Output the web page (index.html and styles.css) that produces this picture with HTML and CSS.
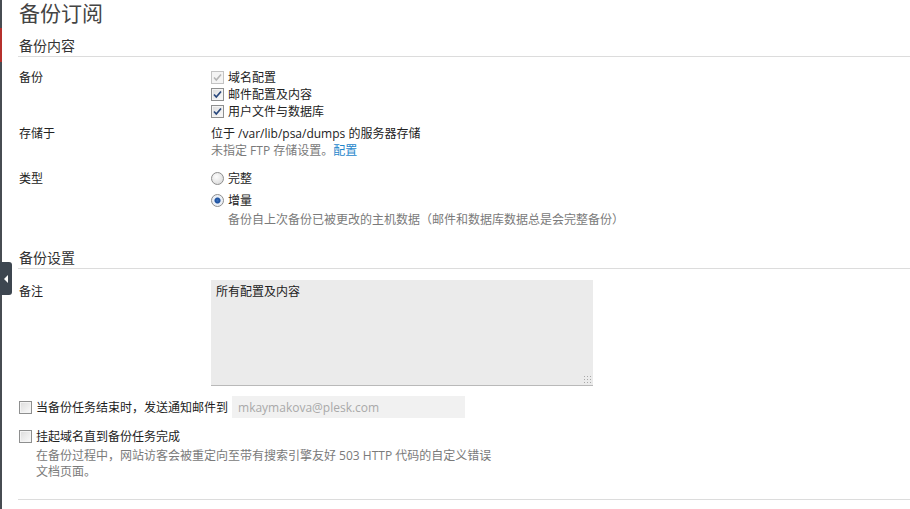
FILE: index.html
```html
<!DOCTYPE html>
<html lang="zh-CN">
<head>
<meta charset="utf-8">
<title>备份订阅</title>
<link rel="stylesheet" href="styles.css">
</head>
<body>
<div class="app">
  <div class="edge">
    <span class="edge-accent"></span>
    <span class="edge-tab"><svg width="5" height="8" viewBox="0 0 5 8"><path d="M4 0 L0 4 L4 8 Z" fill="#fff"/></svg></span>
  </div>
  <main class="page">
    <h1 class="title">备份订阅</h1>

    <h2 class="section-title">备份内容</h2>

    <div class="row row-first">
      <div class="label">备份</div>
      <div class="field">
        <div class="check-line"><span class="cb cb-disabled"><svg viewBox="0 0 11 11"><path d="M2 5.5 L4.3 8 L9 2.5" fill="none" stroke="#b5b5b5" stroke-width="1.6"/></svg></span><span>域名配置</span></div>
        <div class="check-line"><span class="cb"><svg viewBox="0 0 11 11"><path d="M2 5.5 L4.3 8 L9 2.5" fill="none" stroke="#29487d" stroke-width="1.7"/></svg></span><span>邮件配置及内容</span></div>
        <div class="check-line"><span class="cb"><svg viewBox="0 0 11 11"><path d="M2 5.5 L4.3 8 L9 2.5" fill="none" stroke="#29487d" stroke-width="1.7"/></svg></span><span>用户文件与数据库</span></div>
      </div>
    </div>

    <div class="row row-store">
      <div class="label">存储于</div>
      <div class="field">
        <div class="line">位于 /var/lib/psa/dumps 的服务器存储</div>
        <div class="line muted">未指定 FTP 存储设置。<a class="link" href="#">配置</a></div>
      </div>
    </div>

    <div class="row row-type">
      <div class="label">类型</div>
      <div class="field">
        <div class="radio-line"><span class="radio"></span><span>完整</span></div>
        <div class="radio-line radio-second"><span class="radio radio-on"></span><span>增量</span></div>
        <div class="line muted hint">备份自上次备份已被更改的主机数据（邮件和数据库数据总是会完整备份）</div>
      </div>
    </div>

    <h2 class="section-title section-second">备份设置</h2>

    <div class="row row-note">
      <div class="label label-note">备注</div>
      <div class="field">
        <div class="note-wrap">
          <textarea class="note">所有配置及内容</textarea>
          <span class="grip"></span>
        </div>
      </div>
    </div>

    <div class="opt opt-notify">
      <span class="cb cb-empty"></span>
      <span class="opt-text">当备份任务结束时，发送通知邮件到</span>
      <input class="email" type="text" value="mkaymakova@plesk.com">
    </div>

    <div class="opt opt-suspend">
      <span class="cb cb-empty"></span>
      <span class="opt-text">挂起域名直到备份任务完成</span>
    </div>
    <div class="opt-desc">在备份过程中，网站访客会被重定向至带有搜索引擎友好 503 HTTP 代码的自定义错误文档页面。</div>

    <div class="bottom-rule"></div>
  </main>
</div>
</body>
</html>
```

FILE: styles.css
```css
html, body {
  margin: 0;
  padding: 0;
  background: #fff;
}

body {
  font-family: "Open Sans", "Noto Sans CJK SC", sans-serif;
  font-size: 12px;
  color: #222;
  width: 910px;
  height: 509px;
  overflow: hidden;
}

.app {
  display: flex;
  min-height: 509px;
}

.edge {
  width: 2px;
  background: #474c52;
  position: relative;
  flex: none;
}

.edge-accent {
  position: absolute;
  left: 0;
  top: 28px;
  width: 2px;
  height: 34px;
  background: #b5302c;
}

.edge-tab {
  position: absolute;
  left: 0;
  top: 262px;
  width: 12px;
  height: 33px;
  background: #3d4650;
  border-radius: 0 3px 3px 0;
  display: flex;
  align-items: center;
  justify-content: center;
}

.page {
  flex: 1;
  padding-left: 16px;
}

.title {
  margin: 0;
  font-size: 21px;
  font-weight: normal;
  line-height: 26px;
  color: #444;
  padding-left: 1px;
}

.section-title {
  margin: 10px 0 0;
  font-size: 14px;
  font-weight: normal;
  line-height: 20px;
  color: #333;
  padding-left: 1px;
  border-bottom: 1px solid #dcdcdc;
}

.section-second {
  margin-top: 20px;
}

.row {
  display: flex;
  line-height: 17px;
}

.row-first { margin-top: 12px; }
.row-store { margin-top: 5px; }
.row-type { margin-top: 11px; }
.row-note { margin-top: 11px; }

.label {
  width: 192px;
  flex: none;
  padding-left: 1px;
  color: #222;
}

.label-note {
  padding-top: 3px;
}

.field {
  display: flex;
  flex-direction: column;
}

.check-line,
.radio-line {
  display: flex;
  align-items: center;
  gap: 4px;
  height: 17px;
}

.radio-second {
  margin-top: 5px;
}

.hint {
  margin-top: 2px;
  padding-left: 17px;
}

.muted {
  color: #7a7a7a;
}

.link {
  color: #1f87cc;
  text-decoration: none;
}

.cb {
  width: 11px;
  height: 11px;
  border: 1px solid #8e8f8f;
  background: linear-gradient(135deg, #dcdcdc, #fbfbfb);
  display: inline-flex;
  align-items: center;
  justify-content: center;
  flex: none;
  box-shadow: inset 0 0 0 1px #f4f4f4;
}

.cb svg {
  width: 11px;
  height: 11px;
}

.cb-disabled {
  border-color: #c3c3c3;
  background: #f4f4f4;
}

.radio {
  width: 11px;
  height: 11px;
  border: 1px solid #8d8d8d;
  border-radius: 50%;
  background: radial-gradient(circle at 40% 35%, #fdfdfd, #d4d4d4);
  flex: none;
  position: relative;
}

.radio-on {
  background: radial-gradient(circle, #3a72c0 0, #1c4f9c 2.5px, #e8eef7 3.5px, #f5f5f5 100%);
}

.note-wrap {
  position: relative;
  width: 382px;
  height: 106px;
}

.note {
  width: 382px;
  height: 106px;
  box-sizing: border-box;
  margin: 0;
  padding: 3px 5px;
  border: none;
  border-bottom: 1px solid #b9b9b9;
  background: #ebebeb;
  font-family: "Open Sans", "Noto Sans CJK SC", sans-serif;
  font-size: 12px;
  line-height: 17px;
  color: #222;
  resize: none;
  outline: none;
  display: block;
}

.grip {
  position: absolute;
  right: 2px;
  bottom: 3px;
  width: 8px;
  height: 8px;
  background-image: radial-gradient(circle, #a8a8a8 0.7px, transparent 0.9px);
  background-size: 3px 3px;
}

.opt {
  display: flex;
  align-items: center;
  padding-left: 1px;
}

.opt .cb {
  margin-right: 4px;
}

.opt-notify {
  margin-top: 10px;
  height: 22px;
}

.opt-suspend {
  margin-top: 10px;
  height: 17px;
}

.opt-text {
  line-height: 17px;
  color: #222;
}

.email {
  margin-left: 4px;
  width: 233px;
  height: 22px;
  box-sizing: border-box;
  border: none;
  background: #f1f1f1;
  padding: 0 6px;
  font-family: "Open Sans", "Noto Sans CJK SC", sans-serif;
  font-size: 12px;
  color: #a9a9a9;
  outline: none;
}

.opt-desc {
  margin-top: 3px;
  padding-left: 18px;
  width: 460px;
  line-height: 16px;
  color: #7a7a7a;
}

.bottom-rule {
  margin-top: 19px;
  border-top: 1px solid #dcdcdc;
}
```
